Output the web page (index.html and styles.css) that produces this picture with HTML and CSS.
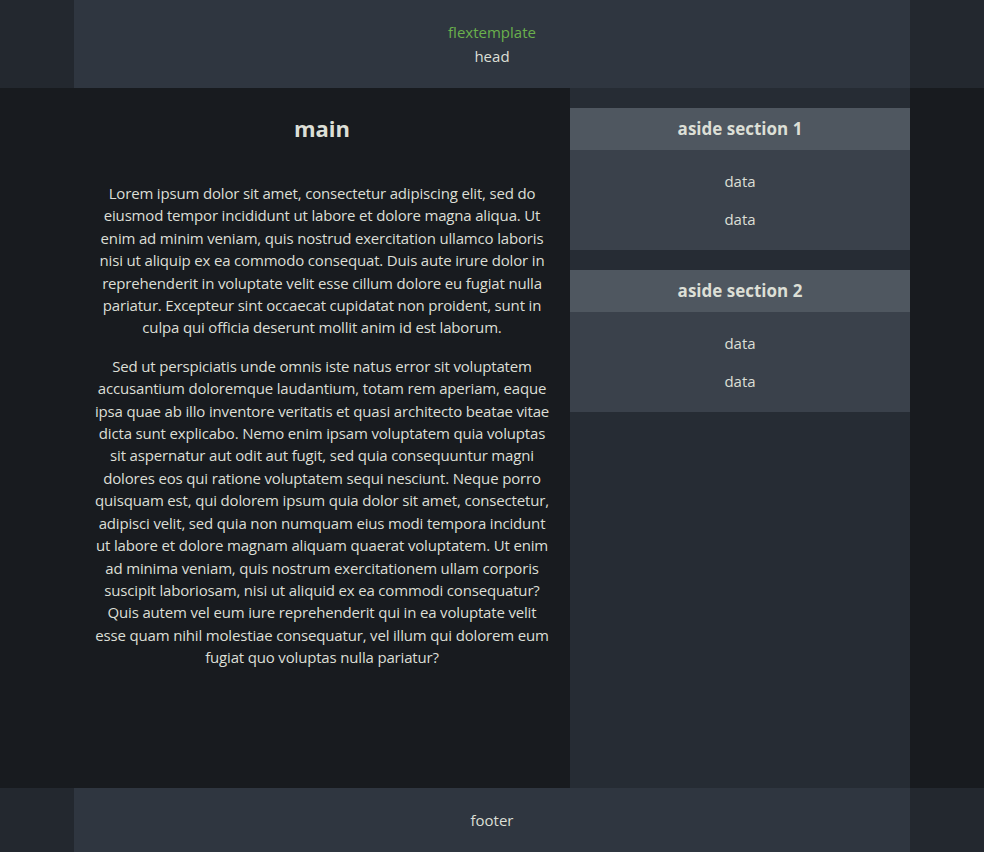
FILE: index.html
```html
<!DOCTYPE html>
<html lang="en">
<head>
<meta charset="utf-8">
<title>flextemplate</title>
<link rel="stylesheet" href="styles.css">
</head>
<body>
<div class="page">
  <header class="band band-head">
    <div class="inner">
      <div class="brand">flextemplate</div>
      <div>head</div>
    </div>
  </header>
  <div class="content">
    <main class="main">
      <h2 class="main-title">main</h2>
      <p>Lorem ipsum dolor sit amet, consectetur adipiscing elit, sed do eiusmod tempor incididunt ut labore et dolore magna aliqua. Ut enim ad minim veniam, quis nostrud exercitation ullamco laboris nisi ut aliquip ex ea commodo consequat. Duis aute irure dolor in reprehenderit in voluptate velit esse cillum dolore eu fugiat nulla pariatur. Excepteur sint occaecat cupidatat non proident, sunt in culpa qui officia deserunt mollit anim id est laborum.</p>
      <p>Sed ut perspiciatis unde omnis iste natus error sit voluptatem accusantium doloremque laudantium, totam rem aperiam, eaque ipsa quae ab illo inventore veritatis et quasi architecto beatae vitae dicta sunt explicabo. Nemo enim ipsam voluptatem quia voluptas sit aspernatur aut odit aut fugit, sed quia consequuntur magni dolores eos qui ratione voluptatem sequi nesciunt. Neque porro quisquam est, qui dolorem ipsum quia dolor sit amet, consectetur, adipisci velit, sed quia non numquam eius modi tempora incidunt ut labore et dolore magnam aliquam quaerat voluptatem. Ut enim ad minima veniam, quis nostrum exercitationem ullam corporis suscipit laboriosam, nisi ut aliquid ex ea commodi consequatur? Quis autem vel eum iure reprehenderit qui in ea voluptate velit esse quam nihil molestiae consequatur, vel illum qui dolorem eum fugiat quo voluptas nulla pariatur?</p>
    </main>
    <aside class="aside">
      <section class="box">
        <h3 class="box-head">aside section 1</h3>
        <div class="box-body">
          <div class="item">data</div>
          <div class="item">data</div>
        </div>
      </section>
      <section class="box">
        <h3 class="box-head">aside section 2</h3>
        <div class="box-body">
          <div class="item">data</div>
          <div class="item">data</div>
        </div>
      </section>
    </aside>
  </div>
  <footer class="band band-foot">
    <div class="inner">footer</div>
  </footer>
</div>
</body>
</html>
```
FILE: styles.css
```css
html, body {
  margin: 0;
  padding: 0;
  height: 100%;
}
body {
  background: #181b1f;
  color: #dcdfd6;
  font-family: "Open Sans", "Noto Sans", "DejaVu Sans", sans-serif;
  font-size: 15px;
}
.page {
  display: flex;
  flex-direction: column;
  min-height: 100vh;
}
.band {
  background: #23282f;
}
.inner {
  width: 836px;
  margin: 0 auto;
  background: #2f3640;
  text-align: center;
  padding: 20px 0;
  line-height: 24px;
}
.brand {
  color: #6ab04c;
}
.content {
  flex: 1;
  width: 836px;
  margin: 0 auto;
  display: flex;
}
.main {
  flex: 0 0 496px;
  box-sizing: border-box;
  padding: 20px 20px;
  text-align: center;
  background: #181b1f;
}
.main-title {
  margin: 0 0 34px;
  font-size: 22px;
  line-height: 40px;
  font-weight: 700;
}
.main p {
  margin: 0 0 16px;
  line-height: 22.4px;
  letter-spacing: -0.17px;
}
.aside {
  flex: 1;
  background: #262c34;
  padding-top: 20px;
  display: flex;
  flex-direction: column;
  gap: 20px;
}
.box-head {
  margin: 0;
  height: 42px;
  line-height: 42px;
  font-size: 17px;
  font-weight: 700;
  text-align: center;
  background: #4f5760;
}
.box-body {
  background: #3a414b;
  padding: 12px 0;
  text-align: center;
}
.item {
  line-height: 38px;
}
```
